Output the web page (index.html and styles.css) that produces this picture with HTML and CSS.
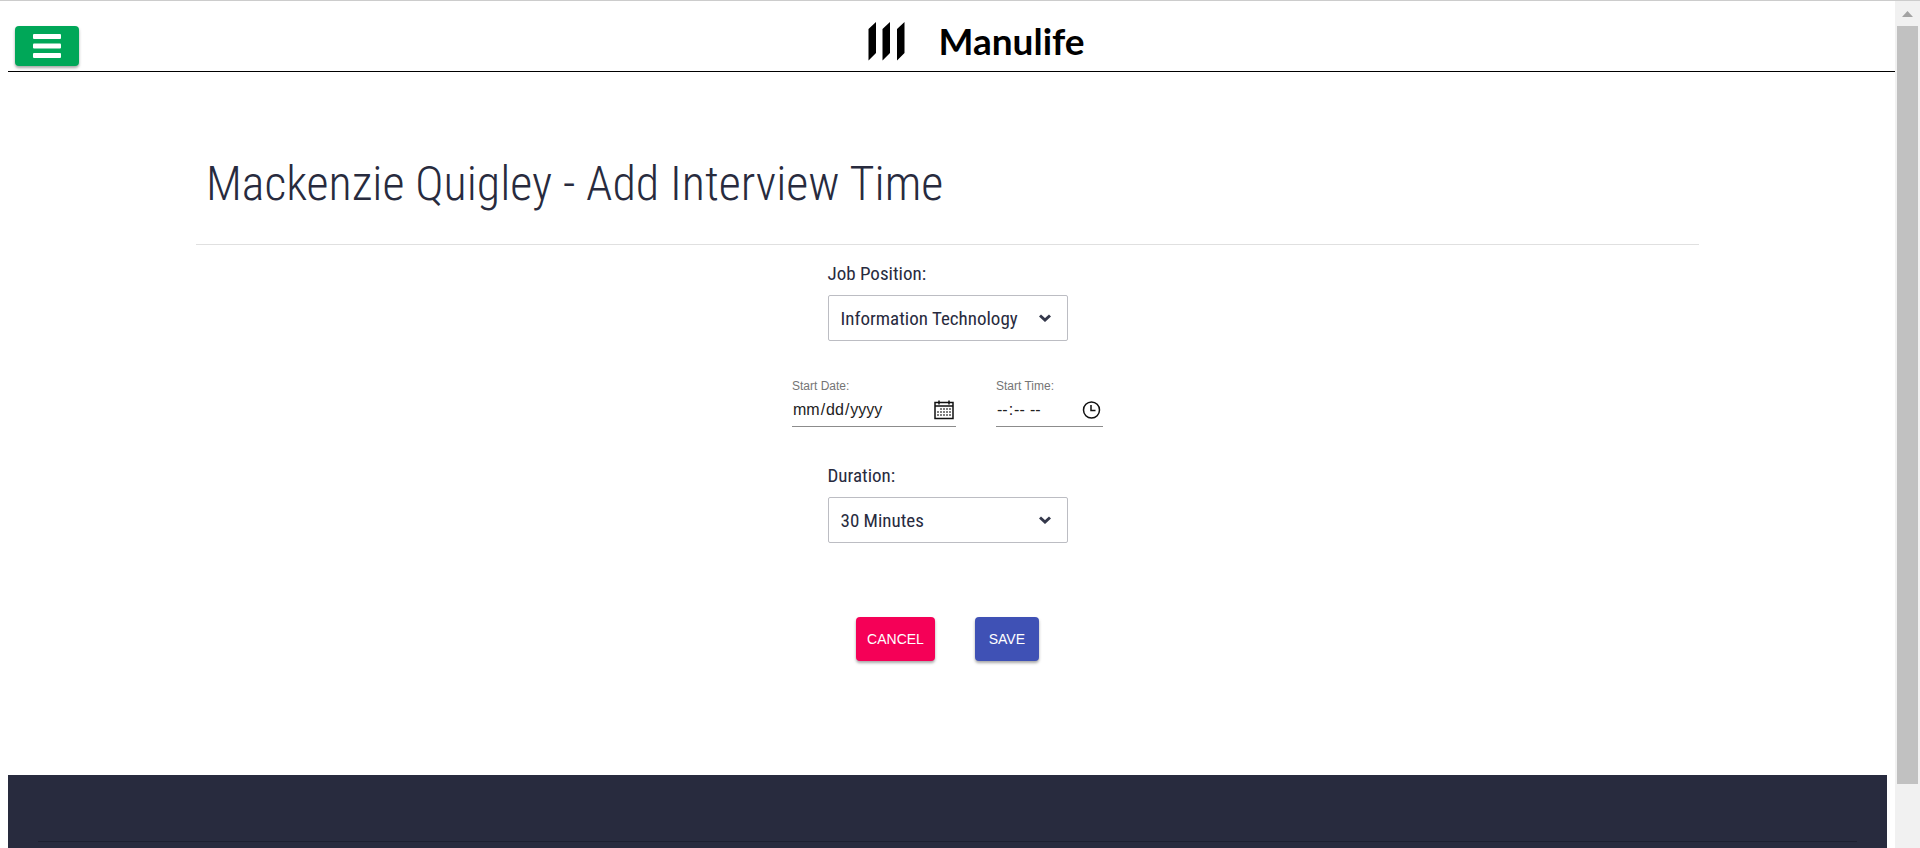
FILE: index.html
```html
<!DOCTYPE html>
<html lang="en">
<head>
<meta charset="utf-8">
<title>Add Interview Time</title>
<link rel="stylesheet" href="styles.css">
</head>
<body>
<div class="window">
  <div class="page">
    <header class="topbar">
      <button class="menu-button" type="button" aria-label="Open menu">
        <svg width="28" height="24" viewBox="0 0 28 24" fill="#fff"><rect width="28" height="5" rx="1"/><rect y="9.500" width="28" height="5" rx="1"/><rect y="19" width="28" height="5" rx="1"/></svg>
      </button>
      <a class="brand" href="#">
        <svg width="37" height="40" viewBox="0 0 37 40"><path d="M0.500 8 8 1v31L0.500 39.500zM14.500 8 22 1v31l-7.500 7.500zM29 8l7.500-7v31L29 39.500z"/></svg>
        <span class="brand-name">Manulife</span>
      </a>
    </header>
    <main class="content">
      <h1 class="title">Mackenzie Quigley - Add Interview Time</h1>
      <form class="form">
        <div class="field">
          <label class="field-label" for="position">Job Position:</label>
          <div class="select-wrap">
            <select class="select" id="position"><option>Information Technology</option></select>
            <svg class="chevron" width="12" height="8" viewBox="0 0 12 8"><path d="M1 1.500 6 6l5-4.500" fill="none" stroke="#34384b" stroke-width="3"/></svg>
          </div>
        </div>
        <div class="times">
          <div class="picker">
            <label class="picker-label" for="date">Start Date:</label>
            <div class="picker-line">
              <input class="picker-input date" id="date" type="date">
              <svg width="20" height="20" viewBox="0 0 20 20" fill="none" stroke="#111"><path d="M1 2.500h18V18.500H1z" stroke-width="1.500"/><path d="M1 6h18M5 .5v4M15 .5v4" stroke-width="1.500"/><path d="M7 8v9M10 8v9M13 8v9M16 8v9" stroke-width="1.500" stroke-dasharray="2 1" stroke="#555"/><path d="M4 11v6" stroke-width="1.500" stroke-dasharray="2 1" stroke="#555"/></svg>
            </div>
          </div>
          <div class="picker">
            <label class="picker-label" for="time">Start Time:</label>
            <div class="picker-line">
              <input class="picker-input time" id="time" type="time">
              <svg width="20" height="20" viewBox="0 0 20 20" fill="none" stroke="#111"><circle cx="10.500" cy="10" r="8" stroke-width="1.500"/><path d="M10 5v5.500h4.500" stroke-width="1.500"/></svg>
            </div>
          </div>
        </div>
        <div class="field">
          <label class="field-label" for="duration">Duration:</label>
          <div class="select-wrap">
            <select class="select" id="duration"><option>30 Minutes</option></select>
            <svg class="chevron" width="12" height="8" viewBox="0 0 12 8"><path d="M1 1.500 6 6l5-4.500" fill="none" stroke="#34384b" stroke-width="3"/></svg>
          </div>
        </div>
        <div class="actions">
          <button class="action cancel" type="button">CANCEL</button>
          <button class="action save" type="submit">SAVE</button>
        </div>
      </form>
    </main>
    <footer class="footer"><hr class="footer-rule"></footer>
  </div>
  <div class="scrollbar" aria-hidden="true">
    <svg width="11" height="6" viewBox="0 0 11 6"><path d="M5.500 0 11 6H0z" fill="#a3a3a3"/></svg>
    <div class="thumb"></div>
  </div>
</div>
</body>
</html>
```
FILE: styles.css
```css
* { box-sizing: border-box; }
body {
  margin: 0;
  background: #fff;
  color: #282b3e;
  font-family: "Roboto Condensed", Roboto, "Liberation Sans", Arial, sans-serif;
}
.window {
  display: flex;
  min-height: 100vh;
  border-top: 1px solid #ccc;
}
.page {
  flex: 1;
  display: flex;
  flex-direction: column;
  padding: 0 8px;
}
.topbar {
  display: grid;
  grid-template-columns: 1fr auto 1fr;
  height: 71px;
  margin-right: -8px;
  padding: 0 7px;
  border-bottom: 1px solid #000;
}
.menu-button {
  display: flex;
  align-items: center;
  justify-content: center;
  width: 64px;
  height: 40px;
  margin-top: 25px;
  padding: 0;
  border: 0;
  border-radius: 4px;
  background: #00a758;
  box-shadow: 0 2px 3px rgba(0, 0, 0, .35);
}
.brand {
  display: flex;
  align-items: center;
  gap: 33px;
  height: 80px;
  padding-left: 50px;
  color: #000;
  text-decoration: none;
}
.brand-name {
  font: 700 37px/40px Lato, sans-serif;
}
.content {
  width: 80%;
  margin: 0 auto;
}
.title {
  margin: 0 0 16px;
  padding: 82px 10px 30px;
  border-bottom: 1px solid #e0e0e0;
  font-weight: 300;
  font-size: 48px;
  line-height: 60px;
}
.form {
  display: flex;
  flex-direction: column;
  align-items: center;
}
.field { width: 240px; }
.field-label {
  display: block;
  margin-bottom: 8px;
  font-size: 19px;
  line-height: 26px;
}
.select-wrap {
  position: relative;
}
.select {
  appearance: none;
  width: 100%;
  height: 46px;
  padding: 0 12px;
  border: 1px solid #bcbdc3;
  border-radius: 2px;
  background: #fff;
  color: inherit;
  font: inherit;
  font-size: 19px;
}
.chevron {
  position: absolute;
  top: 19px;
  right: 17px;
  pointer-events: none;
}
.times {
  display: flex;
  gap: 40px;
  margin: 37px 0 36px;
}
.picker-label {
  display: block;
  color: #757575;
  font: 12px/16px "Liberation Sans", Arial, sans-serif;
}
.picker-line {
  display: flex;
  align-items: center;
  justify-content: space-between;
  height: 33px;
  padding-right: 2px;
  border-bottom: 1px solid #8c8c8c;
}
.picker-input {
  padding: 0;
  border: 0;
  background: none;
  color: #222;
  font: 16px/20px "Liberation Sans", Arial, sans-serif;
}
.picker-input::-webkit-calendar-picker-indicator { display: none; }
.date { width: 142px; }
.time { width: 85px; }
.actions {
  display: flex;
  gap: 40px;
  margin: 74px 0 114px;
}
.action {
  min-width: 64px;
  height: 44px;
  border: 0;
  border-radius: 4px;
  color: #fff;
  font: 14px/24px "Liberation Sans", Arial, sans-serif;
  box-shadow: 0 2px 3px rgba(0, 0, 0, .35);
}
.cancel { padding: 0 11px; background: #f50057; }
.save { padding: 0 13px; background: #3f51b5; }
.footer {
  flex: 1;
  padding: 66px 30px 0;
  background: #282b3e;
}
.footer-rule {
  margin: 0;
  border: 0;
  border-top: 1px solid #1e2030;
}
.scrollbar {
  display: flex;
  flex-direction: column;
  align-items: center;
  gap: 9px;
  width: 25px;
  padding: 10px 2px 64px;
  background: #f1f1f1;
}
.thumb {
  flex: 1;
  width: 100%;
  background: #c1c1c1;
}
```
